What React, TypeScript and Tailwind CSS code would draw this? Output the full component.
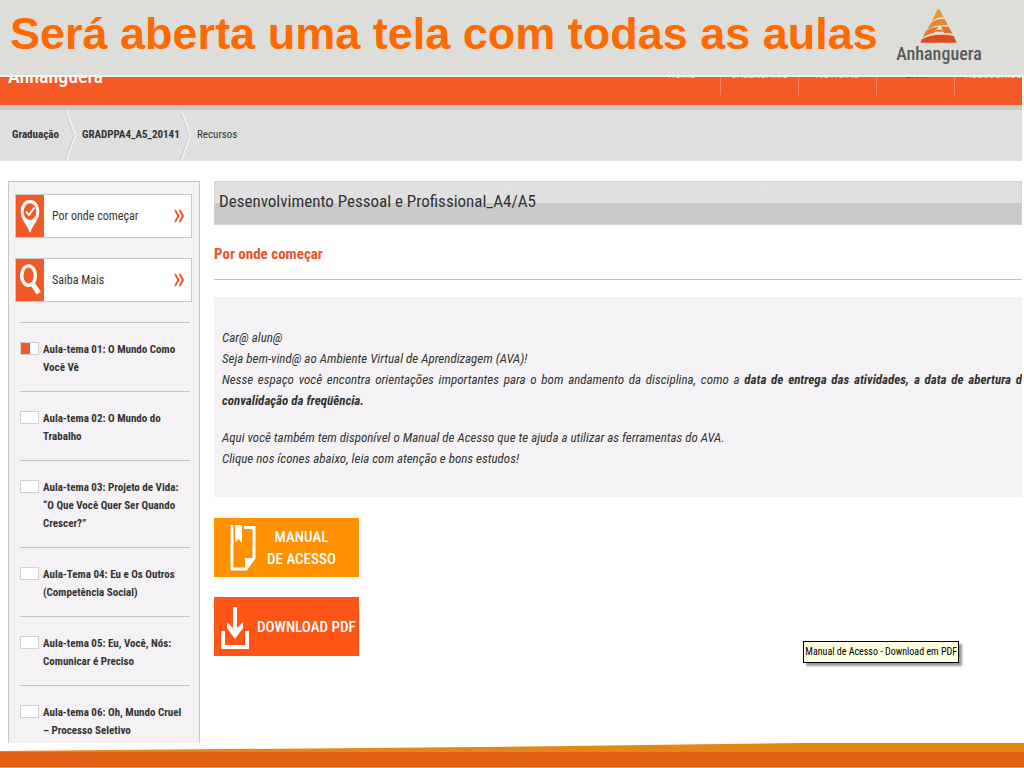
import { ReactNode } from "react";

const NAV = [
  { label: "HOME" },
  { label: "CALENDÁRIO" },
  { label: "NOTÍCIAS" },
  { label: "SAIR", active: true },
  { label: "ACESSÓRIOS" },
];

const LESSONS = [
  { title: "Aula-tema 01: O Mundo Como Você Vê", started: true },
  { title: "Aula-tema 02: O Mundo do Trabalho" },
  { title: "Aula-tema 03: Projeto de Vida: “O Que Você Quer Ser Quando Crescer?”" },
  { title: "Aula-Tema 04: Eu e Os Outros (Competência Social)" },
  { title: "Aula-tema 05: Eu, Você, Nós: Comunicar é Preciso" },
  { title: "Aula-tema 06: Oh, Mundo Cruel – Processo Seletivo" },
];

function Logo() {
  return (
    <div className="flex w-[86px] shrink-0 flex-col items-center">
      <svg viewBox="841 24 112 105" className="h-[34px] w-[37px]" aria-hidden="true">
        <path d="M892 29Q897 21 902 29L913 50C900 48 886 54 877 62Z" fill="#e29a2c" />
        <path d="M874 67C885 57 903 53 916 55L926 74C904 71 880 76 863 86Z" fill="#e5872a" />
        <path d="M859 91C870 83 882 80 896 79L883 98C868 101 856 106 847 113Z" fill="#e8792a" />
        <path d="M905 78L928 79L941 101C932 99 924 98 914 98Z" fill="#e8702a" />
        <path d="M889 88H908L911 94H885Z" fill="#e8752a" />
        <path d="M845 118C872 101 916 101 944 107L953 128H841Z" fill="#dc4c24" />
      </svg>
      <span className="text-[18px] leading-[22px] font-medium text-[#5a5a5a]">Anhanguera</span>
    </div>
  );
}

function Chevron() {
  return (
    <svg viewBox="0 0 12 51" className="h-[51px] w-3 shrink-0" fill="none" aria-hidden="true">
      <path d="M1 0L10 25.5L1 51" stroke="#f4f4f4" strokeWidth="2" />
      <path d="M0 0L9 25.5L0 51" stroke="#c8c8c8" />
    </svg>
  );
}

function PinIcon() {
  return (
    <svg viewBox="0 0 28 43" className="h-full w-7" aria-hidden="true">
      <path d="M14 5C8 5 4.500 10 4.500 17C4.500 25 10 29 14 39C18 29 23.500 25 23.500 17C23.500 10 20 5 14 5Z" fill="#fff" />
      <ellipse cx="14" cy="17" rx="6.500" ry="8.500" fill="#f15a26" />
      <path d="M10 17L13 20.500L18.500 13" stroke="#fff" strokeWidth="2" fill="none" />
    </svg>
  );
}

function SearchIcon() {
  return (
    <svg viewBox="0 0 28 43" className="h-full w-7" fill="none" stroke="#fff" aria-hidden="true">
      <ellipse cx="12.500" cy="17" rx="7" ry="10" strokeWidth="3.500" />
      <path d="M17 26L23 35" strokeWidth="5" />
    </svg>
  );
}

function SideLink({ icon, children }: { icon: ReactNode; children: ReactNode }) {
  return (
    <a href="#" className="flex h-11 items-center border border-[#c8c8c8] bg-white text-[12px] text-[#333]">
      <span className="h-full w-7 bg-[#f15a26]">{icon}</span>
      <span className="flex-1 pl-2">{children}</span>
      <svg viewBox="0 0 10 14" className="mr-[7px] h-[14px] w-[10px]" fill="none" stroke="#f15a26" strokeWidth="2" aria-hidden="true">
        <path d="M1 1L4.500 7L1 13M5.500 1L9 7L5.500 13" />
      </svg>
    </a>
  );
}

export default function App() {
  return (
    <div className="flex min-h-screen flex-col overflow-hidden bg-white font-['Roboto_Condensed','Liberation_Sans',sans-serif] text-[#333]">
      <header className="flex h-[77px] items-start border-b-2 border-[#f4f2f2] bg-[#dddeda] pl-[10px] pt-[9px]">
        <h1 className="mr-[18px] whitespace-nowrap font-['Liberation_Sans',sans-serif] text-[45px] leading-[50px] font-bold text-[#ff6a00]">
          Será aberta uma tela com todas as aulas
        </h1>
        <Logo />
      </header>

      <div className="pr-[2px]">
        <div className="flex h-7 justify-between overflow-hidden bg-[#f55a26]">
          <span className="-mt-[13px] pl-2 text-[20px] leading-6 font-medium text-white">Anhanguera</span>
          <nav className="-mr-[11px] flex h-[18px]">
            {NAV.map((item) => (
              <a
                key={item.label}
                href="#"
                className={`w-[78px] border-r border-[#f7855f] text-center text-[11px] leading-3 ${item.active ? "text-[#7c3a20]" : "text-[#fbc9b5]"}`}
              >
                <span className="-mt-2 block">{item.label}</span>
              </a>
            ))}
          </nav>
        </div>
        <div className="h-[5px] bg-linear-to-b from-[#c4bfc0] to-[#d4cccf]" />
        <nav className="flex h-[51px] items-center bg-[#dfdfdf] pl-3 text-[11px]">
          <a href="#" className="w-[53px] font-bold">Graduação</a>
          <Chevron />
          <a href="#" className="w-[103px] pl-[5px] font-bold">GRADPPA4_A5_20141</a>
          <Chevron />
          <span className="pl-[5px]">Recursos</span>
        </nav>
      </div>

      <main className="flex flex-1 gap-[14px] pl-2 pr-[2px] pt-5">
        <aside className="w-[192px] shrink-0 border border-b-0 border-[#c8c8c8] bg-[#f4f2f4] pl-[6px] pr-[7px] pt-3">
          <div className="flex flex-col gap-5">
            <SideLink icon={<PinIcon />}>Por onde começar</SideLink>
            <SideLink icon={<SearchIcon />}>Saiba Mais</SideLink>
          </div>
          <ul className="mt-5 pl-[5px] pr-[2px]">
            {LESSONS.map((lesson) => (
              <li key={lesson.title} className="border-t border-[#c4c4c4] pt-[18px] pb-[14px] last:pb-[3px]">
                <a href="#" className="flex gap-1 pr-1 text-[11px] leading-[18px] font-bold">
                  <span className="mt-px h-[13px] w-[19px] shrink-0 border border-[#d0d0d0] bg-white">
                    {lesson.started && <span className="block h-full w-[9px] bg-[#f15a26]" />}
                  </span>
                  <span>{lesson.title}</span>
                </a>
              </li>
            ))}
          </ul>
        </aside>

        <section className="relative min-w-0 flex-1">
          <h2 className="h-11 border border-[#d2d2d2] bg-linear-to-b from-[#e0e0e0] from-50% to-[#cacaca] to-50% pl-1 text-[17px] leading-[38px]">
            Desenvolvimento Pessoal e Profissional_A4/A5
          </h2>
          <h3 className="mt-[18px] border-b border-[#c4c4c4] pb-[14px] text-[15px] leading-[22px] font-bold text-[#f0522a]">
            Por onde começar
          </h3>

          <div className="mt-[17px] overflow-hidden bg-[#f4f2f4] pt-[30px] pb-7 pl-2 text-[13px] leading-[21px] italic">
            <p>Car@ alun@</p>
            <p>Seja bem-vind@ ao Ambiente Virtual de Aprendizagem (AVA)!</p>
            <p className="-mr-[6px] text-justify">
              Nesse espaço você encontra orientações importantes para o bom andamento da disciplina, como a{" "}
              <b>data de entrega das atividades, a data de abertura da convalidação da freqüência.</b>
            </p>
            <p className="mt-4">Aqui você também tem disponível o Manual de Acesso que te ajuda a utilizar as ferramentas do AVA.</p>
            <p>Clique nos ícones abaixo, leia com atenção e bons estudos!</p>
          </div>

          <div className="mt-[21px] flex flex-col items-start gap-5 text-[15px] leading-[22px] font-medium text-white">
            <button type="button" className="flex h-[59px] w-[145px] items-center bg-[#ff9000] pl-4">
              <svg viewBox="0 0 26 48" className="h-12 w-[26px]" aria-hidden="true">
                <path d="M14 3.500H24V34L16 45H2V1" fill="none" stroke="#fff" strokeWidth="3" />
                <path d="M5 1H12V19L8.500 15L5 19ZM15 45V34H24Z" fill="#fff" />
              </svg>
              <span className="flex-1 pr-3 text-center">MANUAL<br />DE ACESSO</span>
            </button>
            <button type="button" className="flex h-[59px] w-[145px] items-center gap-2 bg-[#ff5516] pl-[7px]">
              <svg viewBox="0 0 28 44" className="h-11 w-7 shrink-0" fill="none" stroke="#fff" aria-hidden="true">
                <path d="M2 26V42H26V26" strokeWidth="4" />
                <path d="M14 2V30" strokeWidth="4" />
                <path d="M6 17L14 25L22 17V23L14 34L6 23Z" fill="#fff" stroke="none" />
              </svg>
              <span className="whitespace-nowrap">DOWNLOAD PDF</span>
            </button>
          </div>

          <div
            role="tooltip"
            className="absolute top-[460px] right-[63px] border border-black bg-[#ffffe1] px-px text-[10px] leading-5 whitespace-nowrap text-black shadow-[3px_3px_2px_rgba(0,0,0,0.4)]"
          >
            Manual de Acesso - Download em PDF
          </div>
        </section>
      </main>

      <footer>
        <svg viewBox="0 0 1024 25" preserveAspectRatio="none" className="block h-[25px] w-full" aria-hidden="true">
          <path d="M0 8L480 4L800 0H1024V25H0Z" fill="#e58618" />
          <path d="M0 9H1024V24H0Z" fill="#e06014" />
          <path d="M0 24H1024V25H0Z" fill="#f0a878" />
        </svg>
      </footer>
    </div>
  );
}
